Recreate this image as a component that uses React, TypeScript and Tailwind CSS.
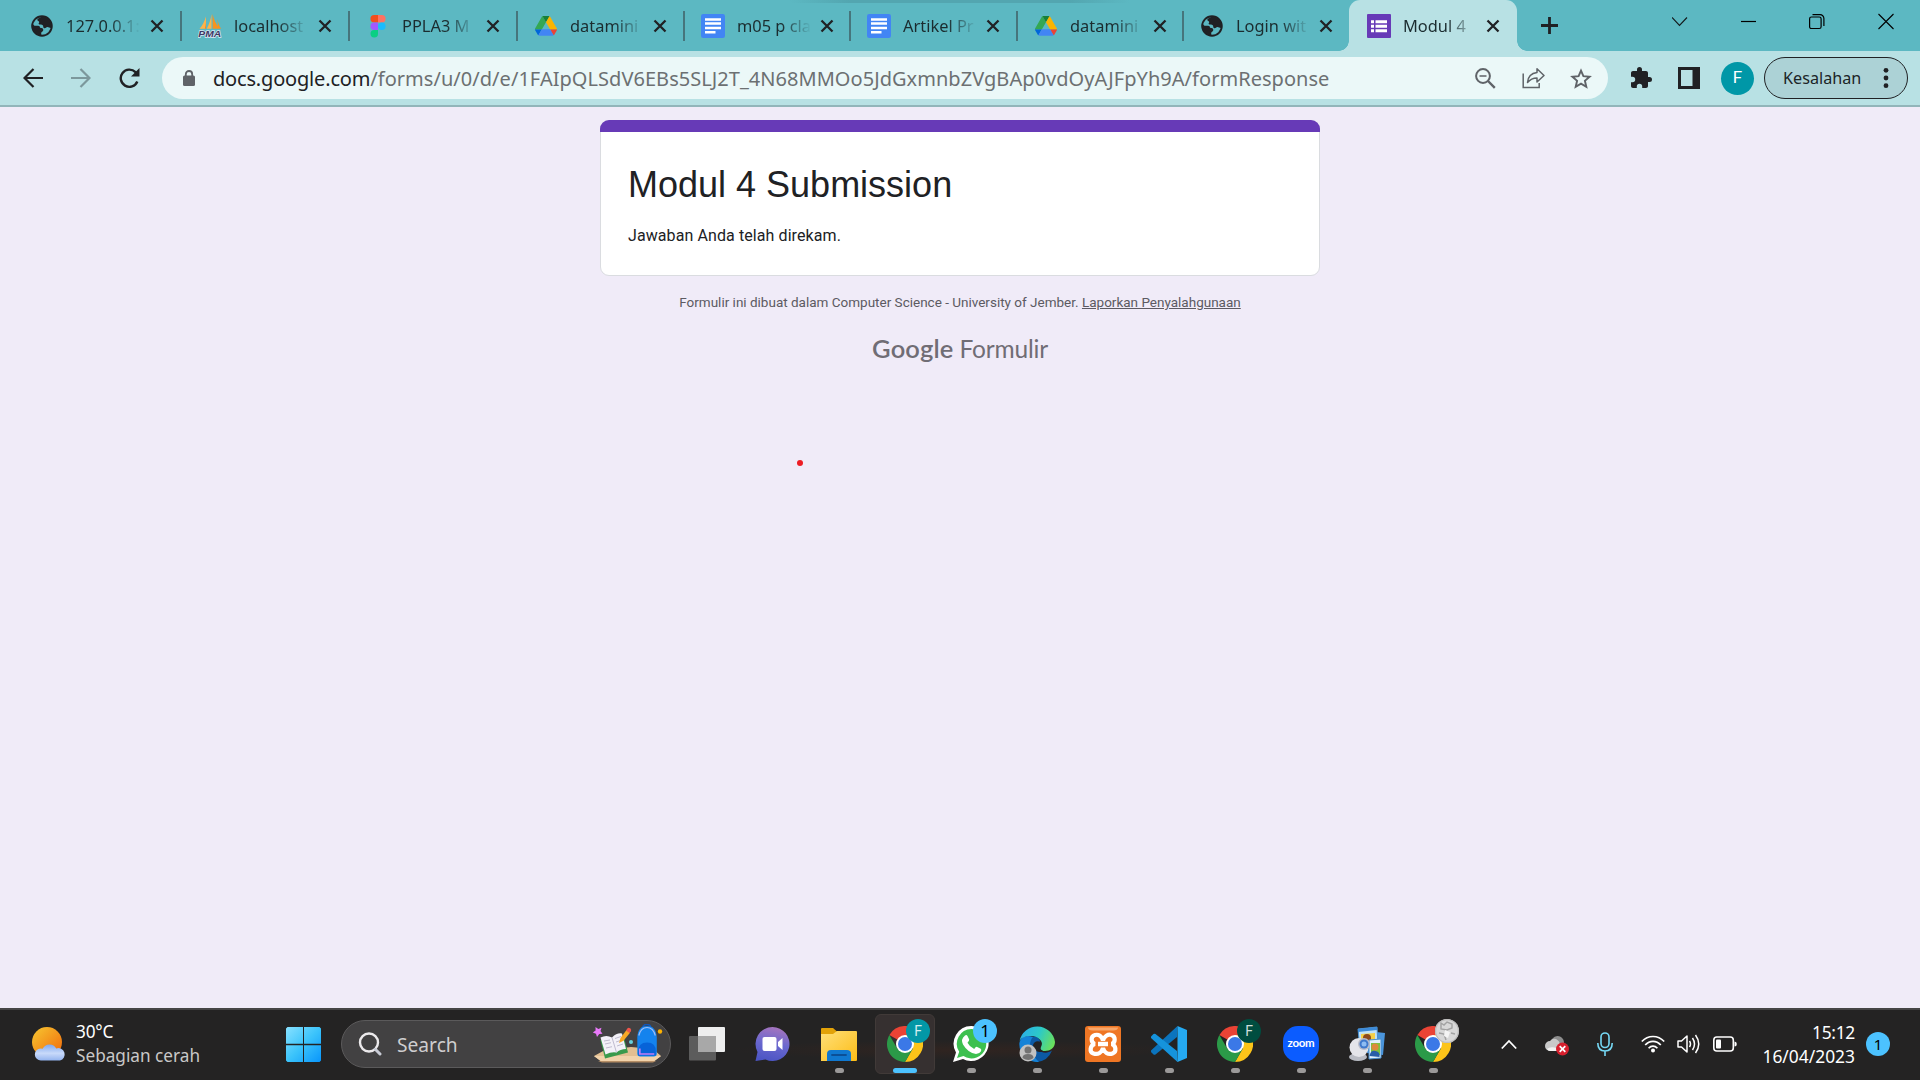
import React from 'react';

type IconName = 'globe' | 'pma' | 'figma' | 'drive' | 'docs' | 'forms';

const tabs: { title: string; icon: IconName; width: string }[] = [
  { title: '127.0.0.1:', icon: 'globe', width: 'w-[168px]' },
  { title: 'localhost', icon: 'pma', width: 'w-[168px]' },
  { title: 'PPLA3 M', icon: 'figma', width: 'w-[168px]' },
  { title: 'datamini', icon: 'drive', width: 'w-[167px]' },
  { title: 'm05 p cla', icon: 'docs', width: 'w-[166px]' },
  { title: 'Artikel Pr', icon: 'docs', width: 'w-[167px]' },
  { title: 'datamini', icon: 'drive', width: 'w-[166px]' },
  { title: 'Login wit', icon: 'globe', width: 'w-[167px]' },
];

function Favicon({ name }: { name: IconName }) {
  switch (name) {
    case 'globe':
      return (
        <svg width="24" height="24" viewBox="0 0 24 24">
          <circle cx="12" cy="12" r="9.8" fill="none" stroke="#202124" strokeWidth="1.9" />
          <path
            d="M2 9.500l2.500 2.300h3.500c1.500 0 2 .8 2 1.900 2.300.1 3.300.8 3.300 2.200 0 1.300-1.600 1.700-2 2.700-.2.800-.1 1.600.4 3.100A10 10 0 0 1 2 9.500z"
            fill="#202124"
          />
          <path
            d="M11.500 2c-.3 1.800-3.900 2.200-4.200 3.700-.2 1.500 2.100 1.200 1.900 2.500-.1.900-.9 1.300-.5 1.900.7 1 3.300.2 4.300 1.400.5 1-.2 2.400 1.300 2.700 1.600.3 1.700-1.400 3.300-1.200 1 .1 1.800 1 3.800.9A10 10 0 0 0 11.500 2z"
            fill="#202124"
          />
        </svg>
      );
    case 'pma':
      return (
        <svg width="24" height="24" viewBox="0 0 24 24">
          <path d="M8 2.500v12.200H1.500C4.500 11.500 6.500 7.500 8 2.500zM13.500 0v14.700H8.700C11 10.500 12.700 6 13.500 0z" fill="#fdb44a" />
          <path d="M14.500 0c1.200 5 3.500 10.700 7.500 14.700h-7.300zM19.500 5c.5 4 2 7.200 3.500 9.700h-3z" fill="#f7941e" />
          <path d="M8 2.500v12.200H6.800C8 11 8.200 7 8 2.500z" fill="#f58220" />
          <text
            x="0.300"
            y="22.800"
            fontFamily="Liberation Sans, sans-serif"
            fontWeight="700"
            fontStyle="italic"
            fontSize="9.600"
            textLength="22.800"
            lengthAdjust="spacingAndGlyphs"
            fill="#3d3863"
            stroke="#d8e8f4"
            strokeWidth="1.400"
            paintOrder="stroke"
          >
            PMA
          </text>
        </svg>
      );
    case 'figma':
      return (
        <svg width="24" height="24" viewBox="0 0 24 24">
          <path d="M8.200 1H12v7.500H8.200a3.750 3.750 0 0 1 0-7.500z" fill="#f24e1e" />
          <path d="M12 1h3.800a3.750 3.750 0 0 1 0 7.500H12z" fill="#ff7262" />
          <path d="M8.200 8.500H12V16H8.200a3.750 3.750 0 0 1 0-7.500z" fill="#a259ff" />
          <circle cx="15.800" cy="12.250" r="3.750" fill="#1abcfe" />
          <path d="M8.200 16H12v3.700A3.750 3.750 0 1 1 8.200 16z" fill="#0acf83" />
        </svg>
      );
    case 'drive':
      return (
        <svg width="24" height="24" viewBox="0 0 87.300 87.300">
          <g transform="translate(3.500 7) scale(.92)">
            <path d="m6.600 66.850 3.850 6.650c.8 1.400 1.950 2.500 3.300 3.300L27.500 53H0c0 1.550.4 3.100 1.200 4.500z" fill="#0066da" />
            <path d="M43.650 25 29.900 1.200c-1.350.8-2.500 1.900-3.300 3.300L1.200 48.500A9.060 9.060 0 0 0 0 53h27.500z" fill="#34a853" />
            <path d="M73.550 76.800c1.350-.8 2.500-1.900 3.300-3.300l1.600-2.750L86.100 57.500c.8-1.400 1.200-2.950 1.200-4.500H59.798l5.852 11.500z" fill="#ea4335" />
            <path d="M43.650 25 57.400 1.200C56.050.4 54.500 0 52.900 0H34.400c-1.600 0-3.150.45-4.500 1.200z" fill="#188038" />
            <path d="M59.800 53H27.500L13.750 76.800c1.350.8 2.900 1.200 4.500 1.200h50.800c1.600 0 3.150-.45 4.500-1.200z" fill="#4285f4" />
            <path d="m73.400 26.500-12.700-22c-.8-1.400-1.950-2.500-3.300-3.300L43.650 25 59.800 53h27.450c0-1.550-.4-3.100-1.200-4.500z" fill="#fbb400" />
          </g>
        </svg>
      );
    case 'docs':
      return (
        <svg width="24" height="24" viewBox="0 0 24 24">
          <rect width="24" height="24" rx="2.200" fill="#4285f4" />
          <path d="M4 4.300h16v2.500H4zM4 8.300h16v2.500H4zM4 12.700h16v2.500H4zM4 17h10.500v2.500H4z" fill="#fff" />
        </svg>
      );
    case 'forms':
      return (
        <svg width="24" height="24" viewBox="0 0 24 24">
          <rect width="24" height="24" rx="1" fill="#673ab7" />
          <path
            d="M4 6.300h3v3H4zM8.500 6.300H20v3H8.500zM4 10.800h3v3H4zM8.500 10.800H20v3H8.500zM4 15.200h3v3H4zM8.500 15.200H20v3H8.500z"
            fill="#fff"
          />
        </svg>
      );
  }
}

function TabBody({ title, icon, wide = false }: { title: string; icon: IconName; wide?: boolean }) {
  return (
    <>
      <Favicon name={icon} />
      <span
        className={
          'ml-3 h-8 shrink-0 whitespace-nowrap text-[16.4px] leading-8 text-[#1b2c2f] [mask-image:linear-gradient(to_right,#000_44px,transparent_74px)] ' +
          (wide ? 'w-[75px]' : 'w-[74px]')
        }
      >
        {title}
      </span>
      <svg className="ml-[9px] shrink-0" width="14" height="14" viewBox="0 0 14 14">
        <path d="M1.500 1.500l11 11M12.500 1.500l-11 11" stroke="#202124" strokeWidth="2.300" />
      </svg>
    </>
  );
}

function TabStrip() {
  return (
    <div className="flex h-[51px] bg-[#5cb8c2] bg-[linear-gradient(to_right,transparent_790px,#53a6b0_850px,#53a6b0_1070px,transparent_1130px)] bg-[length:100%_3px] bg-no-repeat pl-[12px]">
      {tabs.map((t, i) => (
        <div key={i} className={'flex h-[51px] shrink-0 items-center ' + t.width}>
          <div className={'h-[30px] w-[2px] shrink-0 ' + (i === 0 ? 'bg-transparent' : 'bg-[#46757c]')} />
          <div className="w-[16px] shrink-0" />
          <TabBody title={t.title} icon={t.icon} wide={i < 3} />
        </div>
      ))}
      <div className="relative flex h-[51px] w-[168px] shrink-0 items-center rounded-t-[11px] bg-[#b8e1e4] pl-[18px]">
        <TabBody title="Modul 4" icon="forms" />
        <div className="absolute bottom-0 -left-[10px] size-[10px] bg-[radial-gradient(circle_at_0_0,transparent_9.5px,#b8e1e4_10px)]" />
        <div className="absolute -right-[10px] bottom-0 size-[10px] bg-[radial-gradient(circle_at_100%_0,transparent_9.5px,#b8e1e4_10px)]" />
      </div>
      <svg className="mt-[16px] ml-[23px]" width="19" height="19" viewBox="0 0 19 19">
        <path d="M9.500 1v17M1 9.500h17" stroke="#202124" strokeWidth="2.800" />
      </svg>
      <div className="flex grow items-start justify-end gap-[53px] pt-[13px] pr-[26px]">
        <svg width="16" height="17" viewBox="0 0 16 17">
          <path d="M0 4.500L7.500 12.500l7.500-8" fill="none" stroke="#12181a" strokeWidth="1.100" />
        </svg>
        <svg width="15" height="17" viewBox="0 0 15 17">
          <path d="M0 8.500h15" stroke="#000" strokeWidth="1.200" />
        </svg>
        <svg width="16" height="17" viewBox="0 0 16 17">
          <rect x=".6" y="4" width="11.500" height="11.500" rx="1.800" fill="none" stroke="#000" strokeWidth="1.200" />
          <path d="M3.500 1.700H11a3.800 3.800 0 0 1 3.900 3.800V13" fill="none" stroke="#000" strokeWidth="1.200" />
        </svg>
        <svg width="16" height="17" viewBox="0 0 16 17">
          <path d="M.5 1l15 15M15.500 1L.5 16" stroke="#000" strokeWidth="1.100" />
        </svg>
      </div>
    </div>
  );
}

function Toolbar() {
  return (
    <div className="flex h-[56px] items-center border-b-2 border-[#92b5ba] bg-[#b8e1e4] pl-[23px]">
      <svg width="20" height="20" viewBox="0 0 20 20">
        <path d="M20 10H2M10.500 1L1.500 10l9 9" fill="none" stroke="#202124" strokeWidth="2.200" />
      </svg>
      <svg className="ml-7" width="20" height="20" viewBox="0 0 20 20">
        <path d="M0 10h18M9.500 1l9 9-9 9" fill="none" stroke="#7c989c" strokeWidth="2.200" />
      </svg>
      <svg className="ml-7" width="22" height="22" viewBox="0 0 22 22">
        <path d="M18.300 14.500A8.600 8.600 0 1 1 16.500 5.200l2 2" fill="none" stroke="#202124" strokeWidth="2.400" />
        <path d="M20.500 1v8.500H12z" fill="#202124" />
      </svg>
      <div className="ml-[21px] flex h-[42px] w-[1446px] items-center rounded-full bg-[#ebf8f8] pr-4 pl-[21px]">
        <svg width="12" height="16" viewBox="0 0 12 16">
          <path d="M2.800 6V4.200a3.200 3.200 0 0 1 6.400 0V6" fill="none" stroke="#5f6368" strokeWidth="1.800" />
          <rect y="5.500" width="12" height="10.500" rx="1.500" fill="#5f6368" />
        </svg>
        <span className="ml-[18px] pt-px text-[20px] leading-[42px] whitespace-nowrap text-[#6c7072]">
          <span className="tracking-[-0.18px] text-[#202124]">docs.google.com</span>
          <span className="tracking-[0.04px]">/forms/u/0/d/e/1FAIpQLSdV6EBs5SLJ2T_4N68MMOo5JdGxmnbZVgBAp0vdOyAJFpYh9A/formResponse</span>
        </span>
        <div className="ml-auto flex items-center">
          <svg width="21" height="21" viewBox="0 0 21 21" fill="none" stroke="#5f6368">
            <circle cx="8" cy="8" r="6.900" strokeWidth="2" />
            <path d="M13 13l6.800 6.800" strokeWidth="2.400" />
            <path d="M4.500 8h7" strokeWidth="1.500" />
          </svg>
          <svg className="ml-[26px]" width="23" height="22" viewBox="0 0 23 22" fill="none" stroke="#5f6368" strokeWidth="1.500">
            <path d="M1.200 6.500v14h16v-4.500" />
            <path d="M15 1.800l7 6.700-7 6.500v-4c-4.500 0-7 1.500-9.500 4.500C6 10 9.500 6.300 15 5.600z" strokeLinejoin="round" />
          </svg>
          <svg className="ml-[25px]" width="22" height="21" viewBox="0 0 22 21">
            <path
              d="M11 2.600l2.400 5.600 6.200.5-4.700 4.100 1.400 6L11 15.600l-5.300 3.200 1.400-6L2.400 8.700l6.200-.5z"
              fill="none"
              stroke="#5f6368"
              strokeWidth="1.900"
            />
          </svg>
        </div>
      </div>
      <svg className="ml-[21px]" width="24" height="24" viewBox="0 0 24 24">
        <path
          d="M20.500 11H19V7c0-1.100-.9-2-2-2h-4V3.500a2.500 2.500 0 0 0-5 0V5H4c-1.100 0-2 .9-2 2v3.800h1.500a2.700 2.700 0 0 1 0 5.400H2V20c0 1.100.9 2 2 2h3.800v-1.500a2.700 2.700 0 0 1 5.400 0V22H17c1.100 0 2-.9 2-2v-4h1.500a2.500 2.500 0 0 0 0-5z"
          fill="#202124"
        />
      </svg>
      <svg className="ml-[25px]" width="22" height="22" viewBox="0 0 22 22">
        <path d="M0 0h22v22H0zM3 3v16h11.500V3z" fill="#202124" fillRule="evenodd" />
      </svg>
      <div className="ml-[21px] flex size-[33px] items-center justify-center rounded-full bg-[#0097a7] font-['Roboto',sans-serif] text-[17px] text-white">
        F
      </div>
      <div className="ml-[10px] flex h-[42px] w-[144px] items-center rounded-full border-[1.500px] border-[#202124] bg-[#acd2d6] pl-[18px] text-[16.200px] text-[#1b2427]">
        <span>Kesalahan</span>
        <svg className="ml-[22px]" width="6" height="22" viewBox="0 0 6 22" fill="#202124">
          <circle cx="3" cy="3.300" r="2.400" />
          <circle cx="3" cy="11" r="2.400" />
          <circle cx="3" cy="18.700" r="2.400" />
        </svg>
      </div>
    </div>
  );
}

function FormPage() {
  return (
    <main className="relative flex h-[901px] flex-col items-center bg-[#f0ebf8] pt-[13px]">
      <section className="h-[156px] w-[720px] rounded-[9px] border border-[#dadce0] bg-white">
        <div className="-mx-px -mt-px h-[12px] rounded-t-[9px] bg-[#673ab7]" />
        <h1 className="mt-[30px] ml-[27px] font-['Liberation_Sans',sans-serif] text-[36px] leading-[45px] text-[#202124]">
          Modul 4 Submission
        </h1>
        <p className="mt-[18px] ml-[27px] font-['Roboto',sans-serif] text-[16px] leading-[22px] tracking-[0.090px] text-[#202124]">
          Jawaban Anda telah direkam.
        </p>
      </section>
      <p className="mt-4 font-['Roboto',sans-serif] text-[13.500px] leading-[21px] text-[#5c5a62]">
        Formulir ini dibuat dalam Computer Science - University of Jember. <a className="underline">Laporkan Penyalahgunaan</a>
      </p>
      <div className="mt-[17px] flex items-baseline gap-[6px] font-['Lato',sans-serif] leading-9 text-[#706d75]">
        <span className="text-[25.500px] font-semibold tracking-[0.150px]">Google</span>
        <span className="text-[24.500px] tracking-[-0.2px]">Formulir</span>
      </div>
      <div className="absolute top-[353px] left-[797px] size-[6px] rounded-full bg-[#ed1c24]" />
    </main>
  );
}

function ChromeIcon() {
  return (
    <svg width="36" height="36" viewBox="0 0 36 36">
      <path d="M18 18L2.400 9A18 18 0 0 1 33.600 9z" fill="#ea4335" />
      <path d="M18 9h15.600A18 18 0 0 1 18 36l7.800-13.500z" fill="#fcc419" />
      <path d="M2.400 9l7.800 13.500L18 27l-.2 9A18 18 0 0 1 2.400 9z" fill="#2b9a48" />
      <path d="M18 36l7.800-13.500L18 27l-7.800-4.500z" fill="#2b9a48" />
      <circle cx="18" cy="18" r="9" fill="#fff" />
      <circle cx="18" cy="18" r="7" fill="#3b78e7" />
    </svg>
  );
}

function AppSlot({ children, badge, running = true }: { children: React.ReactNode; badge?: React.ReactNode; running?: boolean }) {
  return (
    <div className="relative flex h-[60px] w-[66px] shrink-0 flex-col items-center pt-[12px]">
      {children}
      {badge && <div className="absolute top-[5px] left-[35px] size-[24px]">{badge}</div>}
      {running && <div className="mt-[6px] h-[5px] w-[9px] rounded-full bg-[#9b9999]" />}
    </div>
  );
}

function SearchBox() {
  return (
    <div className="flex h-[48px] w-[330px] shrink-0 items-center rounded-full border border-[#5b5a5b] bg-[#424142] pr-[6px] pl-[16px]">
      <svg width="24" height="24" viewBox="0 0 24 24" fill="none">
        <circle cx="11" cy="10.500" r="9" stroke="#eceaec" strokeWidth="2.400" />
        <path d="M17.300 17.300l4.700 4.700" stroke="#c9ccd6" strokeWidth="3" strokeLinecap="round" />
      </svg>
      <span className="ml-[15px] pt-[2px] text-[19.200px] text-[#cfcecf]">Search</span>
      <svg className="ml-auto" width="72" height="40" viewBox="0 0 72 40">
        <path d="M2 32L13 26l26-3 22 2 8 7-8 6H10z" fill="#e3bf92" />
        <path d="M2 32h67l-8 6H10z" fill="#f2d3ab" />
        <path d="M6 37h58l-3 1.500H10z" fill="#b68e65" />
        <path d="M3.500 3l2.800 2 3.200-1.200-1 3.200 2 2.800-3.300.2L5 13 4 9.800.8 8.500l2.800-2z" fill="#e879f9" />
        <path d="M8.500 16L13 34.500l23-6-4-15z" fill="#3a9a4c" />
        <path d="M8.500 13.500q6-3 11.500 0 5-5 10-4L34 25q-6 0-9.500 3.500-5-1-11 2z" fill="#f3f1f8" />
        <path d="M20 13.500l4.500 15M12 17l6-1M13 20l6-1.300M14 24l6-1.300M23 14.500l6-2M24 18l6-2M25 22l6-2" stroke="#b9b4c9" strokeWidth=".9" />
        <path d="M27 19l1.500-5 6-8 3.500 2.800-6.500 8z" fill="#f9a825" />
        <path d="M34 6.500l1.500-2.300q1.300-1 2.800.3t.5 2.700L37.500 9z" fill="#f1564b" />
        <circle cx="39" cy="18" r="2" fill="#67d0dc" />
        <circle cx="68" cy="7.500" r="2.200" fill="#ffb300" />
        <g transform="translate(.8 .5)">
          <path d="M50 3.500q0-3.500 4-3.500t4 3.500" fill="none" stroke="#1156b8" strokeWidth="1.700" />
          <path d="M44.500 13Q45 1.500 54.200 1.500T64 13v16q0 3-3 3H47.500q-3 0-3-3z" fill="#1483ee" />
          <path d="M46 11q2-8 8.200-8t8.300 8" stroke="#a2bff5" strokeWidth="1.200" fill="none" />
          <path d="M45.500 27q0-9 8.800-9t8.700 9v4h-17.500z" fill="#0763d8" />
          <path d="M47 24v5.500h14.500" fill="none" stroke="#c17df5" strokeWidth="1.700" />
        </g>
      </svg>
    </div>
  );
}

function Taskbar() {
  return (
    <footer className="flex h-[72px] items-center border-t-2 border-[#464546] bg-[#242323] bg-[radial-gradient(ellipse_at_960px_40px,#302420_0,#242323_230px)] pb-[2px] text-white">
      <svg className="ml-[31px] shrink-0" width="36" height="36" viewBox="0 0 36 36">
        <defs>
          <linearGradient id="sun" x1="0" y1="0" x2="1" y2="1">
            <stop offset="0" stopColor="#f7c831" />
            <stop offset="1" stopColor="#f0670a" />
          </linearGradient>
          <linearGradient id="cloud" x1="0" y1="0" x2="0" y2="1">
            <stop offset="0" stopColor="#7fa8ee" />
            <stop offset=".55" stopColor="#c9dafa" />
            <stop offset="1" stopColor="#94b4ef" />
          </linearGradient>
        </defs>
        <circle cx="16" cy="16" r="15" fill="url(#sun)" />
        <path d="M10 34.500a6 6 0 0 1-.3-12q1.500 0 2 .3a7.500 7.500 0 0 1 13.500-.3A6.300 6.300 0 1 1 29 34.500z" fill="url(#cloud)" />
      </svg>
      <div className="ml-[9px] w-[210px] shrink-0 text-[17.200px] leading-6">
        <div className="tracking-[-0.2px]">30°C</div>
        <div className="text-[#c9c8c8]">Sebagian cerah</div>
      </div>
      <svg className="shrink-0" width="35" height="35" viewBox="0 0 35 35">
        <defs>
          <linearGradient id="win" x1="0" y1="0" x2="1" y2="1">
            <stop offset="0" stopColor="#88e1ff" />
            <stop offset=".5" stopColor="#3cc4fb" />
            <stop offset="1" stopColor="#0895fb" />
          </linearGradient>
        </defs>
        <path d="M1.500 0H17v16.800H0V1.500zM18 0h15.500L35 1.500v15.300H18zM0 18.200h17V35H1.500L0 33.500zM18 18.200h17v15.300L33.500 35H18z" fill="url(#win)" />
      </svg>
      <div className="w-5 shrink-0" />
      <SearchBox />
      <div className="w-[3px] shrink-0" />

      <AppSlot running={false}>
        <svg width="36" height="36" viewBox="0 0 36 36">
          <rect x="9" y="1" width="27" height="25" rx="1" fill="#eeeeee" />
          <rect x="0" y="10" width="27" height="24.500" rx="1" fill="#5c5c5c" />
          <path d="M9 10h18v16H9z" fill="#a8a8a8" />
        </svg>
      </AppSlot>
      <AppSlot running={false}>
        <svg width="36" height="36" viewBox="0 0 36 36">
          <defs>
            <linearGradient id="chat" x1="0.600" y1="0" x2=".4" y2="1">
              <stop offset="0" stopColor="#a674bd" />
              <stop offset=".5" stopColor="#6a68cf" />
              <stop offset="1" stopColor="#4c55c4" />
            </linearGradient>
          </defs>
          <path d="M17.500 1a17 17 0 1 1-7 32.500L.500 35 2.500 26A17 17 0 0 1 17.500 1z" fill="url(#chat)" />
          <rect x="7.500" y="11" width="14" height="14" rx="2" fill="#fff" />
          <path d="M23 16l4.500-4v12l-4.500-4z" fill="#fff" />
        </svg>
      </AppSlot>
      <AppSlot>
        <svg width="36" height="36" viewBox="0 0 36 36">
          <defs>
            <linearGradient id="folder" x1="0" y1="0" x2="1" y2="1">
              <stop offset="0" stopColor="#ffe079" />
              <stop offset="1" stopColor="#fcbc16" />
            </linearGradient>
          </defs>
          <path d="M0 3q0-1 1-1h11l4 3.500V9H0z" fill="#e2a208" />
          <path d="M0 8h12l4-3h19q1 0 1 1v28q0 1-1 1H0z" fill="url(#folder)" />
          <path d="M6 35V28q0-4 4-4h16q4 0 4 4v7z" fill="#1078d0" />
          <path d="M11 29h14" stroke="#0b4f97" strokeWidth="1.800" strokeLinecap="round" />
        </svg>
      </AppSlot>
      <div className="relative flex h-[60px] w-[66px] shrink-0 justify-center">
        <div className="flex h-[60px] w-[60px] flex-col items-center rounded-[6px] border border-[#413a38] bg-[#363030] pt-[11px]">
          <ChromeIcon />
          <div className="mt-[6px] h-[5px] w-6 rounded-full bg-[#4cc2ff]" />
        </div>
        <div className="absolute top-[5px] left-[34px] flex size-[24px] items-center justify-center rounded-full bg-[#0397a6] font-['Roboto',sans-serif] text-[14px] text-[#d3eef0]">
          F
        </div>
      </div>
      <AppSlot
        badge={<div className="flex size-6 items-center justify-center rounded-full bg-[#4cc2ff] text-[17px] text-black">1</div>}
      >
        <svg width="36" height="36" viewBox="0 0 36 36">
          <path d="M18.500 0A17.500 17.500 0 1 1 10 33L0 36l3-9.500A17.700 17.700 0 0 1 18.500 0z" fill="#fff" />
          <path d="M18.500 3A14.700 14.700 0 1 1 10.500 30L4 32l2.200-6.200A14.800 14.800 0 0 1 18.500 3z" fill="#3dc04f" />
          <path
            d="M12 9.500q1.500-1 2.500.5l1.700 3.500q.3 1-1.700 3.200 2.200 4.300 6.700 6.200 1.500-2.300 2.500-2.200l4 2q1 .8.300 2.500-1.600 2.800-5 2.800-8.200-1.300-13-9.500-2.600-5.500 2-9z"
            fill="#fff"
          />
        </svg>
      </AppSlot>
      <AppSlot>
        <svg width="36" height="36" viewBox="0 0 36 36">
          <defs>
            <linearGradient id="edgeTop" x1="0" y1=".3" x2="1" y2=".6">
              <stop offset="0" stopColor="#2baee8" />
              <stop offset=".5" stopColor="#2cc9c8" />
              <stop offset="1" stopColor="#6be05a" />
            </linearGradient>
          </defs>
          <path d="M12 11c6-1 9 1 9 5-3 1-4 4-2 7 3 4 9 5 14 1.500A18 18 0 0 1 18 36C6 32 4 20 12 11z" fill="#0c59a4" />
          <path d="M.300 18C1 11 7 8.500 14 11c-5 5-4 16 6 24.900A18 18 0 0 1 .3 18z" fill="#1583d8" />
          <path d="M.5 15A18 18 0 0 1 36 16c0 6-5 9-10 9-4 0-6-2-4-4 3-5-2-11-10-11C6 10 2 12 .5 15z" fill="url(#edgeTop)" />
          <path d="M14 19c1-4 5-5 8.500-2.500.3 2-1 3.500-1 5.500 0 2 2 3.500 5.500 3.200-5 2-13 1-13-6.200z" fill="#242323" />
          <circle cx="9" cy="27" r="8.500" fill="#c2c2c2" />
          <circle cx="9" cy="24" r="3.500" fill="#737373" />
          <path d="M3.500 32q0-4 5.500-4t5.500 4q-5 4-11 0z" fill="#737373" />
        </svg>
      </AppSlot>
      <AppSlot>
        <svg width="36" height="36" viewBox="0 0 36 36">
          <rect width="36" height="36" rx="3" fill="#ef7624" />
          <path d="M3 1.500h30q0 3-5 3H8q-5 0-5-3z" fill="#f8a76b" />
          <path
            d="M18 14.500C17 10 13.500 8 10 9c-5 1.500-4 8 0 9-5 1-6 8-1.500 9.500C13 29 17 26.500 18 22c1 4.500 5 7 9.500 5.500C32 26 31 19 26.500 18c4-1 4.500-7.500 0-9-3.500-1-7.500 1-8.500 5.500z"
            fill="none"
            stroke="#fff"
            strokeWidth="4.200"
          />
          <path d="M13 18h10" stroke="#fff" strokeWidth="4.500" />
        </svg>
      </AppSlot>
      <AppSlot>
        <svg width="36" height="36" viewBox="0 0 36 36">
          <path d="M26.500 0L0 24.500q-.5 1 .5 2l2 2q1 .5 2 0L26 11z" fill="#0b74bd" />
          <path d="M26.500 36L0 12q-.5-1 .5-2l2-2q1-.5 2 0L26 25z" fill="#1593dc" />
          <path d="M26.500 0L36 4v28l-9.500 4q-.5-.5 0-1.500V1.500z" fill="#25aaf2" />
        </svg>
      </AppSlot>
      <AppSlot
        badge={
          <div className="flex size-6 items-center justify-center rounded-full bg-[#004d40] font-['Roboto',sans-serif] text-[14px] text-[#d0dfdc]">
            F
          </div>
        }
      >
        <ChromeIcon />
      </AppSlot>
      <AppSlot>
        <div className="flex size-9 items-center justify-center rounded-[15px] bg-[#0b5cff] pb-[3px] font-['Lato',sans-serif] text-[11.500px] leading-none font-bold tracking-[-0.3px] text-white">
          zoom
        </div>
      </AppSlot>
      <AppSlot>
        <svg width="36" height="36" viewBox="0 0 36 36">
          <path d="M18 5l18 2-2 22-16-2z" fill="#4a95dc" />
          <path d="M9 3l19-2 1 20-18 3z" fill="#bfe2fa" stroke="#4a90cf" strokeWidth="1" />
          <path d="M9 3l19-2v3L9 6z" fill="#3c8ad8" />
          <path d="M12 8l14-1v10H12z" fill="#f4cf47" />
          <circle cx="18" cy="12" r="4" fill="#8c4a1d" />
          <path d="M20 14l12-1v19l-12 1z" fill="#dff0fb" stroke="#4a90cf" strokeWidth="1" />
          <path d="M22 17h9v12h-9z" fill="#7cc13e" />
          <circle cx="26" cy="21" r="3.500" fill="#dc8a3c" />
          <path d="M20.500 30q1-6 6-5t4 6z" fill="#275da8" />
          <ellipse cx="9" cy="31" rx="9" ry="4" fill="#b9bcc4" />
          <circle cx="10" cy="21.500" r="9.500" fill="#e4e5ea" />
          <circle cx="15" cy="18" r="6" fill="#b8bccb" />
          <circle cx="15" cy="18" r="4.500" fill="#3f79cc" />
          <circle cx="15" cy="18" r="2.500" fill="#8fbdf2" />
        </svg>
      </AppSlot>
      <AppSlot
        badge={
          <svg width="24" height="24" viewBox="0 0 24 24">
            <circle cx="12" cy="12" r="12" fill="#d8d8d8" />
            <path d="M6 4l3 2 3-3 5 2v4l-5 2-6-1zM4 14l5 1 2 6M16 14l4 1" fill="none" stroke="#a2a2a2" strokeWidth="1.400" />
            <path d="M10 11l5 2-2 6-4-2z" fill="#f4f4f4" />
            <circle cx="12" cy="12" r="11.400" fill="none" stroke="#bdbdbd" strokeWidth="1.200" />
          </svg>
        }
      >
        <ChromeIcon />
      </AppSlot>

      <svg className="ml-[35px] shrink-0" width="16" height="11" viewBox="0 0 16 11">
        <path d="M.8 9.500L8 2l7.200 7.500" fill="none" stroke="#fff" strokeWidth="1.800" />
      </svg>
      <svg className="ml-[28px] shrink-0" width="24" height="24" viewBox="0 0 24 24">
        <path d="M7 7q4-5 9-2 3 2 3 6l-8 3z" fill="#8d8d8d" />
        <path d="M5 19a5 5 0 0 1 0-10q2-3 6-2 4 2 4 6l-2 6z" fill="#c9c9c9" />
        <path d="M2 17q3-3 10-1v3H5q-2 0-3-2z" fill="#f2f2f2" />
        <circle cx="17.500" cy="17" r="6.500" fill="#d61f2d" />
        <path d="M14.700 14.200l5.600 5.600M20.300 14.200l-5.600 5.600" stroke="#fff" strokeWidth="1.700" />
      </svg>
      <svg className="ml-[28px] shrink-0" width="16" height="24" viewBox="0 0 16 24" fill="none" stroke="#76d9f5" strokeWidth="1.600">
        <rect x="4" y="1" width="8" height="14.500" rx="4" />
        <path d="M.8 11q0 8 7.200 8t7.200-8M8 19v5" />
      </svg>
      <svg className="ml-[28px] shrink-0" width="24" height="24" viewBox="0 0 24 24" fill="none" stroke="#fff" strokeWidth="1.700">
        <path d="M.8 9.500q4.700-5 11.200-5t11.200 5M4.200 13q3.300-3.700 7.800-3.700t7.800 3.700M7.600 16.300q1.900-2.100 4.400-2.100t4.400 2.100" />
        <circle cx="12" cy="18.500" r="2" fill="#fff" stroke="none" />
      </svg>
      <svg className="ml-[12px] shrink-0" width="24" height="24" viewBox="0 0 24 24" fill="none" stroke="#fff" strokeWidth="1.500" strokeLinejoin="round">
        <path d="M1 9h3.500L10 4v16l-5.500-5H1z" />
        <path d="M12.500 9q2 3 0 6M15.500 6q4 6 0 12M18.500 3q6.500 9 0 18" />
      </svg>
      <svg className="ml-[12px] shrink-0" width="24" height="24" viewBox="0 0 24 24">
        <rect x=".8" y="5" width="19.500" height="14" rx="3" fill="none" stroke="#fff" strokeWidth="1.600" />
        <rect x="3" y="7.500" width="5" height="9" rx="1" fill="#fff" />
        <path d="M21.500 9.500q2.300 0 2.300 2.500t-2.300 2.500z" fill="#fff" />
      </svg>
      <div className="w-[118px] shrink-0 text-right text-[17.400px] leading-6">
        <div className="tracking-[-0.3px]">15:12</div>
        <div>16/04/2023</div>
      </div>
      <div className="ml-[11px] flex size-6 shrink-0 items-center justify-center rounded-full bg-[#4cc2ff] text-[15px] text-black">1</div>
    </footer>
  );
}

export default function App() {
  return (
    <div className="flex h-[1080px] w-[1920px] flex-col overflow-hidden bg-[#f0ebf8] font-['Noto_Sans','Open_Sans',sans-serif]">
      <TabStrip />
      <Toolbar />
      <FormPage />
      <Taskbar />
    </div>
  );
}
